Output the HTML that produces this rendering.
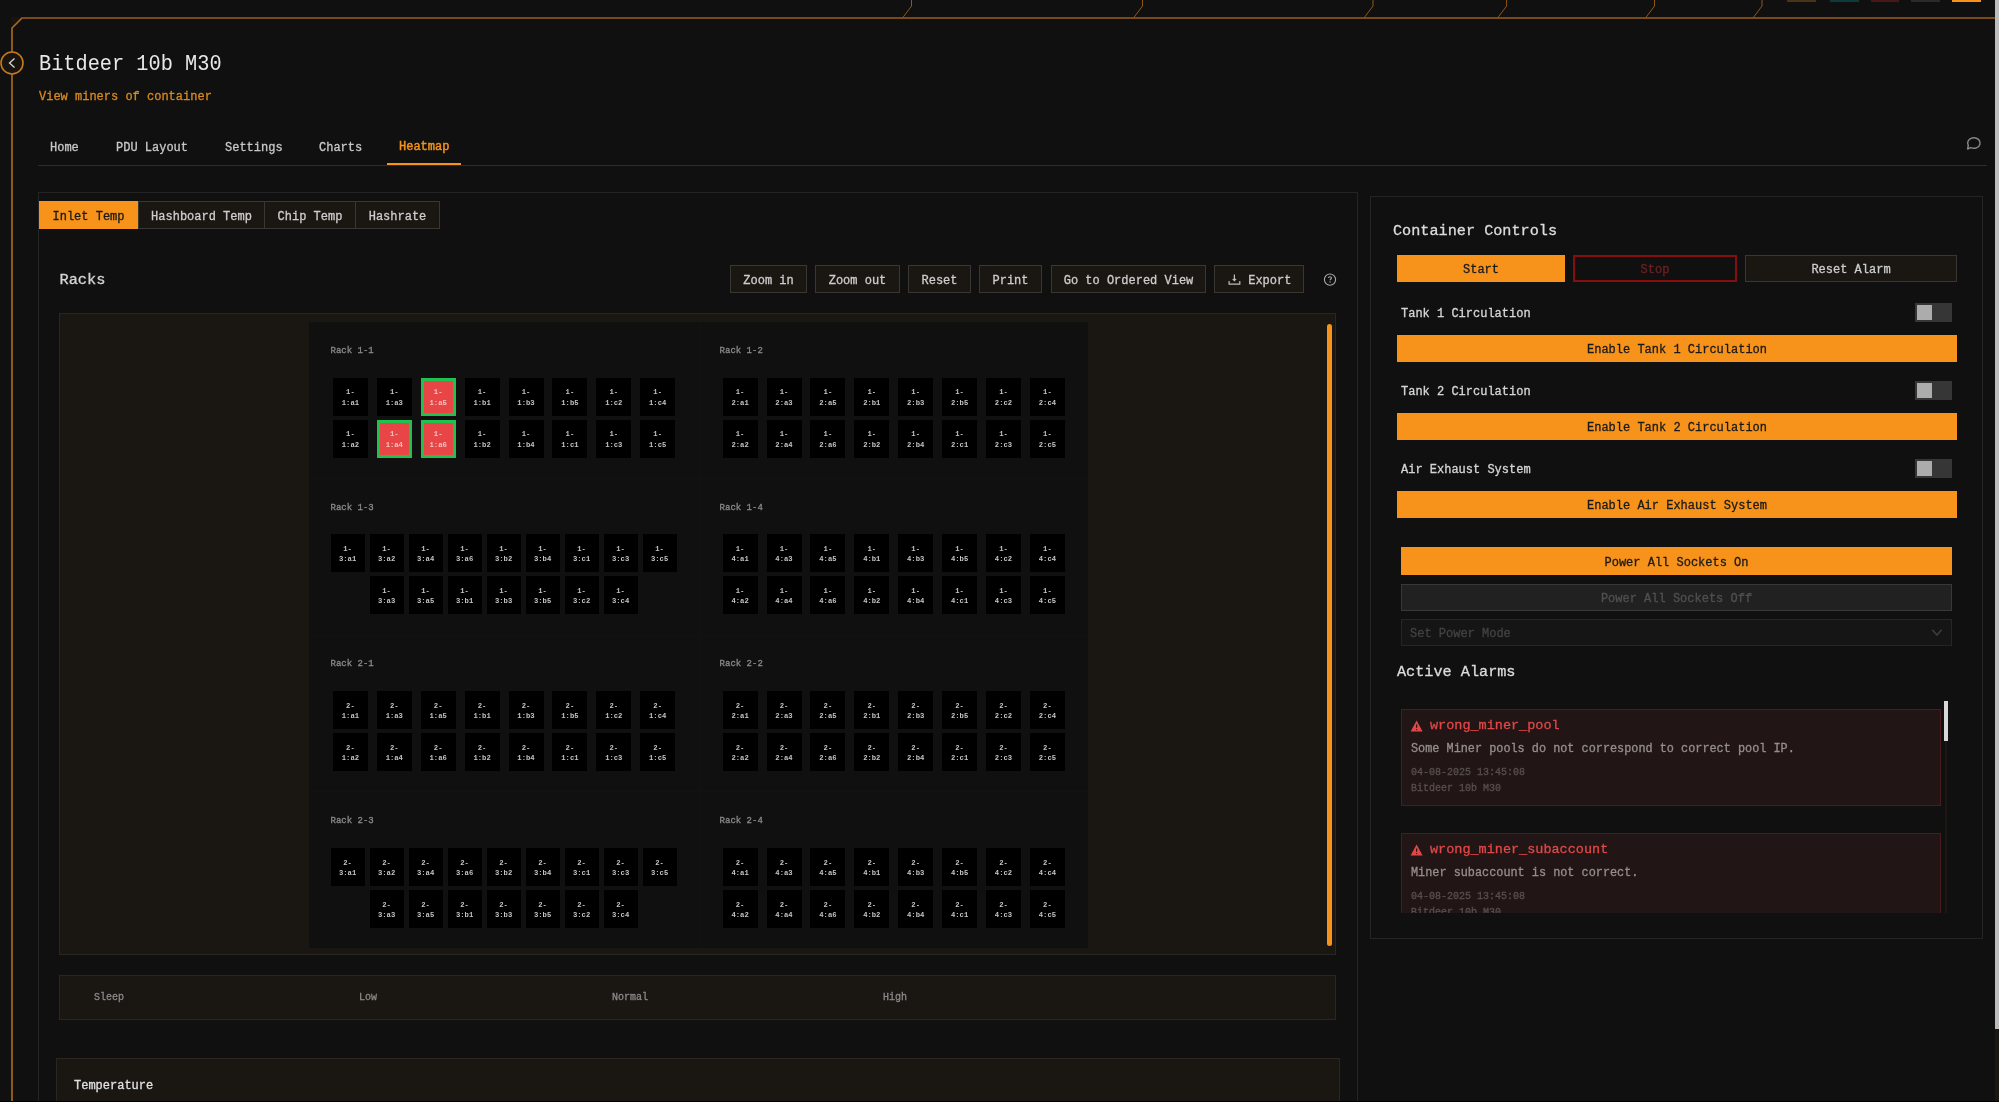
<!DOCTYPE html>
<html><head><meta charset="utf-8">
<style>
*{box-sizing:border-box;margin:0;padding:0}
html,body{width:1999px;height:1102px;overflow:hidden;background:#101010;font-family:"Liberation Mono",monospace;color:#e6e6e6;-webkit-text-stroke:0.3px currentColor}
.a{position:absolute}
.t{position:absolute;white-space:nowrap;line-height:1}
.btn{position:absolute;background:#1a1612;border:1px solid #393633;color:#cdcdcd;font-size:12px;line-height:1;display:flex;align-items:center;justify-content:center;white-space:nowrap;padding-top:3px}
.cell{position:absolute;width:35px;height:37.5px;background:#000;color:#c4c4c4;font-size:7.2px;font-weight:bold;line-height:10.2px;text-align:center;padding-top:9.3px;-webkit-text-stroke:0}
.cell.w{width:34px}
.cell.hot{background:#e84646;border:3px solid #1fc14f;padding-top:6.3px;color:#f2c4c4}
.rl{position:absolute;font-size:9px;color:#8a8a8a;line-height:1;white-space:nowrap;transform:scaleY(1.1);transform-origin:0 0}
.ob{position:absolute;background:#f7931a;color:#1a1a1a;font-size:12px;line-height:1;display:flex;align-items:center;justify-content:center;white-space:nowrap;padding-top:3px}
.lab{position:absolute;font-size:12px;color:#d6d6d6;line-height:1;white-space:nowrap}
.tog{position:absolute;width:37px;height:19px;background:#363636}
.tog i{position:absolute;left:2px;top:2px;width:15px;height:15px;background:#acacac}
</style></head><body><div style="position:absolute;left:0;top:0;width:1999px;height:1102px;will-change:transform">
<svg class="a" style="left:0;top:0" width="1999" height="1102" viewBox="0 0 1999 1102">
  <path d="M11 17 L23 17 L12 28 Z" fill="#19140f"/>
  <path d="M12 1102 L12 28 L22 18" fill="none" stroke="#ad6c1f" stroke-width="1.6"/><path d="M21.5 18 L1995 18" fill="none" stroke="#9c5d1a" stroke-width="1.4"/>
  <path d="M902.5 18 L911.5 6 L911.5 0 M1133.5 18 L1142.5 6 L1142.5 0 M1364 18 L1373 6 L1373 0 M1497.6 18 L1506.6 6 L1506.6 0 M1645.5 18 L1654.5 6 L1654.5 0 M1753 18 L1762 6 L1762 0" fill="none" stroke="#8f5618" stroke-width="1" stroke-linejoin="round"/>
  <circle cx="12" cy="63" r="11" fill="#1a140e" stroke="#c47a1c" stroke-width="1.6"/>
  <path d="M14.5 58.5 L9.5 63 L14.5 67.5" fill="none" stroke="#d8d8d8" stroke-width="1.3"/>
</svg>
<div class="a" style="left:1787px;top:0;width:29px;height:2px;background:#4a3418"></div>
<div class="a" style="left:1830px;top:0;width:29px;height:2px;background:#0f3a3a"></div>
<div class="a" style="left:1871px;top:0;width:28px;height:2px;background:#4a1717"></div>
<div class="a" style="left:1911px;top:0;width:29px;height:2px;background:#2a2a2e"></div>
<div class="a" style="left:1952px;top:0;width:29px;height:2px;background:#f7931a"></div>
<div class="a" style="left:1995px;top:0;width:4px;height:1029px;background:#bdbdbd"></div>
<div class="a" style="left:1995px;top:1029px;width:4px;height:73px;background:#1b1713"></div>
<div class="t" style="left:39px;top:53px;font-size:20.3px;color:#e8e8e8;-webkit-text-stroke:0;transform:scaleY(1.12);transform-origin:0 0">Bitdeer 10b M30</div>
<div class="t" style="left:39px;top:90.6px;font-size:12px;color:#d98a1f">View miners of container</div>
<div class="t" style="left:50px;top:142.4px;font-size:12px;color:#c8c8c8">Home</div>
<div class="t" style="left:116px;top:142.4px;font-size:12px;color:#c8c8c8">PDU Layout</div>
<div class="t" style="left:225px;top:142.4px;font-size:12px;color:#c8c8c8">Settings</div>
<div class="t" style="left:319px;top:142.4px;font-size:12px;color:#c8c8c8">Charts</div>
<div class="t" style="left:399px;top:141.4px;font-size:12px;color:#f7931a;-webkit-text-stroke:0.45px #f7931a">Heatmap</div>
<div class="a" style="left:38px;top:165px;width:1949px;height:1px;background:#2c2c2c"></div>
<div class="a" style="left:387px;top:163px;width:74px;height:2px;background:#f7931a"></div>
<svg class="a" style="left:1962px;top:132.7px" width="24" height="20" viewBox="0 0 24 20">
<path d="M6.3 12.3 A6.2 5.3 0 1 1 8.8 14.6 L5.6 16 Z" fill="none" stroke="#858585" stroke-width="1.5" stroke-linejoin="round"/>
</svg>
<div class="a" style="left:38px;top:192px;width:1320px;height:920px;border:1px solid #242424;border-bottom:none"></div>
<div class="btn" style="left:39px;top:201px;width:99px;height:28px;background:#f7931a;border-color:#f7931a;color:#1a1a1a">Inlet Temp</div>
<div class="btn" style="left:138px;top:201px;width:127px;height:28px">Hashboard Temp</div>
<div class="btn" style="left:264px;top:201px;width:92px;height:28px">Chip Temp</div>
<div class="btn" style="left:355px;top:201px;width:85px;height:28px">Hashrate</div>
<div class="t" style="left:59.5px;top:273px;font-size:15.3px;color:#d4d4d4">Racks</div>
<div class="btn" style="left:730px;top:265px;width:77px;height:28px">Zoom in</div>
<div class="btn" style="left:815px;top:265px;width:85px;height:28px">Zoom out</div>
<div class="btn" style="left:908px;top:265px;width:63px;height:28px">Reset</div>
<div class="btn" style="left:979px;top:265px;width:63px;height:28px">Print</div>
<div class="btn" style="left:1051px;top:265px;width:155px;height:28px">Go to Ordered View</div>
<div class="btn" style="left:1214px;top:265px;width:90px;height:28px">&nbsp;&nbsp;&nbsp;Export</div>
<svg class="a" style="left:1227px;top:272px" width="14" height="14" viewBox="0 0 14 14">
<path d="M7.4 2.6 V8.6 M5.7 6.9 L7.4 8.6 L9.1 6.9 M2.1 9 V12.1 H12.8 V9" fill="none" stroke="#bdbdbd" stroke-width="1.2"/></svg>
<svg class="a" style="left:1322px;top:272px" width="16" height="16" viewBox="0 0 16 16">
<circle cx="8" cy="7.6" r="5.6" fill="none" stroke="#a8a8a8" stroke-width="1.1"/>
<path d="M6.5 6.1 C6.5 5.2 7.2 4.7 8 4.7 C8.8 4.7 9.5 5.2 9.5 6 C9.5 7 8.1 7.1 8.1 8.3" fill="none" stroke="#a8a8a8" stroke-width="1.1"/>
<path d="M7.3 10 H8.9" stroke="#a8a8a8" stroke-width="0.9"/></svg>
<div class="a" style="left:59px;top:313px;width:1277px;height:642px;background:#1a1612;border:1px solid #2a2622"></div>
<div class="a" style="left:309px;top:322px;width:779px;height:626px;background:#101011"></div>
<div class="a" style="left:1327px;top:324px;width:5px;height:622px;background:#f7931a;border-radius:3px"></div>
<div class="a" style="left:699px;top:322px;width:1px;height:626px;background:#121212"></div>
<div class="a" style="left:309px;top:478px;width:779px;height:1px;background:#121212"></div>
<div class="a" style="left:309px;top:635px;width:779px;height:1px;background:#121212"></div>
<div class="a" style="left:309px;top:791px;width:779px;height:1px;background:#121212"></div>
<div class="rl" style="left:330.5px;top:345.5px">Rack 1-1</div>
<div class="cell " style="left:332.9px;top:378px">1-<br>1:a1</div>
<div class="cell " style="left:376.8px;top:378px">1-<br>1:a3</div>
<div class="cell hot" style="left:420.7px;top:378px">1-<br>1:a5</div>
<div class="cell " style="left:464.6px;top:378px">1-<br>1:b1</div>
<div class="cell " style="left:508.5px;top:378px">1-<br>1:b3</div>
<div class="cell " style="left:552.4px;top:378px">1-<br>1:b5</div>
<div class="cell " style="left:596.3px;top:378px">1-<br>1:c2</div>
<div class="cell " style="left:640.2px;top:378px">1-<br>1:c4</div>
<div class="cell " style="left:332.9px;top:420px">1-<br>1:a2</div>
<div class="cell hot" style="left:376.8px;top:420px">1-<br>1:a4</div>
<div class="cell hot" style="left:420.7px;top:420px">1-<br>1:a6</div>
<div class="cell " style="left:464.6px;top:420px">1-<br>1:b2</div>
<div class="cell " style="left:508.5px;top:420px">1-<br>1:b4</div>
<div class="cell " style="left:552.4px;top:420px">1-<br>1:c1</div>
<div class="cell " style="left:596.3px;top:420px">1-<br>1:c3</div>
<div class="cell " style="left:640.2px;top:420px">1-<br>1:c5</div>
<div class="rl" style="left:719.6px;top:345.5px">Rack 1-2</div>
<div class="cell " style="left:722.6px;top:378px">1-<br>2:a1</div>
<div class="cell " style="left:766.5px;top:378px">1-<br>2:a3</div>
<div class="cell " style="left:810.4px;top:378px">1-<br>2:a5</div>
<div class="cell " style="left:854.3px;top:378px">1-<br>2:b1</div>
<div class="cell " style="left:898.2px;top:378px">1-<br>2:b3</div>
<div class="cell " style="left:942.1px;top:378px">1-<br>2:b5</div>
<div class="cell " style="left:986.0px;top:378px">1-<br>2:c2</div>
<div class="cell " style="left:1029.9px;top:378px">1-<br>2:c4</div>
<div class="cell " style="left:722.6px;top:420px">1-<br>2:a2</div>
<div class="cell " style="left:766.5px;top:420px">1-<br>2:a4</div>
<div class="cell " style="left:810.4px;top:420px">1-<br>2:a6</div>
<div class="cell " style="left:854.3px;top:420px">1-<br>2:b2</div>
<div class="cell " style="left:898.2px;top:420px">1-<br>2:b4</div>
<div class="cell " style="left:942.1px;top:420px">1-<br>2:c1</div>
<div class="cell " style="left:986.0px;top:420px">1-<br>2:c3</div>
<div class="cell " style="left:1029.9px;top:420px">1-<br>2:c5</div>
<div class="rl" style="left:330.5px;top:502.5px">Rack 1-3</div>
<div class="cell w" style="left:330.6px;top:534.4px">1-<br>3:a1</div>
<div class="cell w" style="left:369.6px;top:534.4px">1-<br>3:a2</div>
<div class="cell w" style="left:408.6px;top:534.4px">1-<br>3:a4</div>
<div class="cell w" style="left:447.6px;top:534.4px">1-<br>3:a6</div>
<div class="cell w" style="left:486.6px;top:534.4px">1-<br>3:b2</div>
<div class="cell w" style="left:525.6px;top:534.4px">1-<br>3:b4</div>
<div class="cell w" style="left:564.6px;top:534.4px">1-<br>3:c1</div>
<div class="cell w" style="left:603.6px;top:534.4px">1-<br>3:c3</div>
<div class="cell w" style="left:642.6px;top:534.4px">1-<br>3:c5</div>
<div class="cell w" style="left:369.6px;top:576.4px">1-<br>3:a3</div>
<div class="cell w" style="left:408.6px;top:576.4px">1-<br>3:a5</div>
<div class="cell w" style="left:447.6px;top:576.4px">1-<br>3:b1</div>
<div class="cell w" style="left:486.6px;top:576.4px">1-<br>3:b3</div>
<div class="cell w" style="left:525.6px;top:576.4px">1-<br>3:b5</div>
<div class="cell w" style="left:564.6px;top:576.4px">1-<br>3:c2</div>
<div class="cell w" style="left:603.6px;top:576.4px">1-<br>3:c4</div>
<div class="rl" style="left:719.6px;top:502.5px">Rack 1-4</div>
<div class="cell " style="left:722.6px;top:534.4px">1-<br>4:a1</div>
<div class="cell " style="left:766.5px;top:534.4px">1-<br>4:a3</div>
<div class="cell " style="left:810.4px;top:534.4px">1-<br>4:a5</div>
<div class="cell " style="left:854.3px;top:534.4px">1-<br>4:b1</div>
<div class="cell " style="left:898.2px;top:534.4px">1-<br>4:b3</div>
<div class="cell " style="left:942.1px;top:534.4px">1-<br>4:b5</div>
<div class="cell " style="left:986.0px;top:534.4px">1-<br>4:c2</div>
<div class="cell " style="left:1029.9px;top:534.4px">1-<br>4:c4</div>
<div class="cell " style="left:722.6px;top:576.4px">1-<br>4:a2</div>
<div class="cell " style="left:766.5px;top:576.4px">1-<br>4:a4</div>
<div class="cell " style="left:810.4px;top:576.4px">1-<br>4:a6</div>
<div class="cell " style="left:854.3px;top:576.4px">1-<br>4:b2</div>
<div class="cell " style="left:898.2px;top:576.4px">1-<br>4:b4</div>
<div class="cell " style="left:942.1px;top:576.4px">1-<br>4:c1</div>
<div class="cell " style="left:986.0px;top:576.4px">1-<br>4:c3</div>
<div class="cell " style="left:1029.9px;top:576.4px">1-<br>4:c5</div>
<div class="rl" style="left:330.5px;top:659.2px">Rack 2-1</div>
<div class="cell " style="left:332.9px;top:691.4px">2-<br>1:a1</div>
<div class="cell " style="left:376.8px;top:691.4px">2-<br>1:a3</div>
<div class="cell " style="left:420.7px;top:691.4px">2-<br>1:a5</div>
<div class="cell " style="left:464.6px;top:691.4px">2-<br>1:b1</div>
<div class="cell " style="left:508.5px;top:691.4px">2-<br>1:b3</div>
<div class="cell " style="left:552.4px;top:691.4px">2-<br>1:b5</div>
<div class="cell " style="left:596.3px;top:691.4px">2-<br>1:c2</div>
<div class="cell " style="left:640.2px;top:691.4px">2-<br>1:c4</div>
<div class="cell " style="left:332.9px;top:733.4px">2-<br>1:a2</div>
<div class="cell " style="left:376.8px;top:733.4px">2-<br>1:a4</div>
<div class="cell " style="left:420.7px;top:733.4px">2-<br>1:a6</div>
<div class="cell " style="left:464.6px;top:733.4px">2-<br>1:b2</div>
<div class="cell " style="left:508.5px;top:733.4px">2-<br>1:b4</div>
<div class="cell " style="left:552.4px;top:733.4px">2-<br>1:c1</div>
<div class="cell " style="left:596.3px;top:733.4px">2-<br>1:c3</div>
<div class="cell " style="left:640.2px;top:733.4px">2-<br>1:c5</div>
<div class="rl" style="left:719.6px;top:659.2px">Rack 2-2</div>
<div class="cell " style="left:722.6px;top:691.4px">2-<br>2:a1</div>
<div class="cell " style="left:766.5px;top:691.4px">2-<br>2:a3</div>
<div class="cell " style="left:810.4px;top:691.4px">2-<br>2:a5</div>
<div class="cell " style="left:854.3px;top:691.4px">2-<br>2:b1</div>
<div class="cell " style="left:898.2px;top:691.4px">2-<br>2:b3</div>
<div class="cell " style="left:942.1px;top:691.4px">2-<br>2:b5</div>
<div class="cell " style="left:986.0px;top:691.4px">2-<br>2:c2</div>
<div class="cell " style="left:1029.9px;top:691.4px">2-<br>2:c4</div>
<div class="cell " style="left:722.6px;top:733.4px">2-<br>2:a2</div>
<div class="cell " style="left:766.5px;top:733.4px">2-<br>2:a4</div>
<div class="cell " style="left:810.4px;top:733.4px">2-<br>2:a6</div>
<div class="cell " style="left:854.3px;top:733.4px">2-<br>2:b2</div>
<div class="cell " style="left:898.2px;top:733.4px">2-<br>2:b4</div>
<div class="cell " style="left:942.1px;top:733.4px">2-<br>2:c1</div>
<div class="cell " style="left:986.0px;top:733.4px">2-<br>2:c3</div>
<div class="cell " style="left:1029.9px;top:733.4px">2-<br>2:c5</div>
<div class="rl" style="left:330.5px;top:815.5px">Rack 2-3</div>
<div class="cell w" style="left:330.6px;top:848.4px">2-<br>3:a1</div>
<div class="cell w" style="left:369.6px;top:848.4px">2-<br>3:a2</div>
<div class="cell w" style="left:408.6px;top:848.4px">2-<br>3:a4</div>
<div class="cell w" style="left:447.6px;top:848.4px">2-<br>3:a6</div>
<div class="cell w" style="left:486.6px;top:848.4px">2-<br>3:b2</div>
<div class="cell w" style="left:525.6px;top:848.4px">2-<br>3:b4</div>
<div class="cell w" style="left:564.6px;top:848.4px">2-<br>3:c1</div>
<div class="cell w" style="left:603.6px;top:848.4px">2-<br>3:c3</div>
<div class="cell w" style="left:642.6px;top:848.4px">2-<br>3:c5</div>
<div class="cell w" style="left:369.6px;top:890.4px">2-<br>3:a3</div>
<div class="cell w" style="left:408.6px;top:890.4px">2-<br>3:a5</div>
<div class="cell w" style="left:447.6px;top:890.4px">2-<br>3:b1</div>
<div class="cell w" style="left:486.6px;top:890.4px">2-<br>3:b3</div>
<div class="cell w" style="left:525.6px;top:890.4px">2-<br>3:b5</div>
<div class="cell w" style="left:564.6px;top:890.4px">2-<br>3:c2</div>
<div class="cell w" style="left:603.6px;top:890.4px">2-<br>3:c4</div>
<div class="rl" style="left:719.6px;top:815.5px">Rack 2-4</div>
<div class="cell " style="left:722.6px;top:848.4px">2-<br>4:a1</div>
<div class="cell " style="left:766.5px;top:848.4px">2-<br>4:a3</div>
<div class="cell " style="left:810.4px;top:848.4px">2-<br>4:a5</div>
<div class="cell " style="left:854.3px;top:848.4px">2-<br>4:b1</div>
<div class="cell " style="left:898.2px;top:848.4px">2-<br>4:b3</div>
<div class="cell " style="left:942.1px;top:848.4px">2-<br>4:b5</div>
<div class="cell " style="left:986.0px;top:848.4px">2-<br>4:c2</div>
<div class="cell " style="left:1029.9px;top:848.4px">2-<br>4:c4</div>
<div class="cell " style="left:722.6px;top:890.4px">2-<br>4:a2</div>
<div class="cell " style="left:766.5px;top:890.4px">2-<br>4:a4</div>
<div class="cell " style="left:810.4px;top:890.4px">2-<br>4:a6</div>
<div class="cell " style="left:854.3px;top:890.4px">2-<br>4:b2</div>
<div class="cell " style="left:898.2px;top:890.4px">2-<br>4:b4</div>
<div class="cell " style="left:942.1px;top:890.4px">2-<br>4:c1</div>
<div class="cell " style="left:986.0px;top:890.4px">2-<br>4:c3</div>
<div class="cell " style="left:1029.9px;top:890.4px">2-<br>4:c5</div>
<div class="a" style="left:59px;top:975px;width:1277px;height:45px;background:#1a1612;border:1px solid #2a2622"></div>
<div class="t" style="left:94px;top:993px;font-size:10px;color:#8a8a8a">Sleep</div>
<div class="t" style="left:359px;top:993px;font-size:10px;color:#8a8a8a">Low</div>
<div class="t" style="left:612px;top:993px;font-size:10px;color:#8a8a8a">Normal</div>
<div class="t" style="left:883px;top:993px;font-size:10px;color:#8a8a8a">High</div>
<div class="a" style="left:56px;top:1058px;width:1284px;height:60px;background:#1a1612;border:1px solid #2a2622"></div>
<div class="t" style="left:74px;top:1080px;font-size:12px;color:#e0e0e0">Temperature</div>
<div class="a" style="left:1370px;top:196px;width:613px;height:743px;border:1px solid #242424"></div>
<div class="t" style="left:1393px;top:224px;font-size:15.2px;color:#dcdcdc">Container Controls</div>
<div class="ob" style="left:1397px;top:255px;width:168px;height:27px">Start</div>
<div class="btn" style="left:1573px;top:255px;width:164px;height:27px;background:#101010;border:2px solid #880d0d;color:#6a2222">Stop</div>
<div class="btn" style="left:1745px;top:255px;width:212px;height:27px">Reset Alarm</div>
<div class="lab" style="left:1401px;top:308px">Tank 1 Circulation</div>
<div class="tog" style="left:1915px;top:303px"><i></i></div>
<div class="ob" style="left:1397px;top:335px;width:560px;height:27px">Enable Tank 1 Circulation</div>
<div class="lab" style="left:1401px;top:386px">Tank 2 Circulation</div>
<div class="tog" style="left:1915px;top:381px"><i></i></div>
<div class="ob" style="left:1397px;top:413px;width:560px;height:27px">Enable Tank 2 Circulation</div>
<div class="lab" style="left:1401px;top:464px">Air Exhaust System</div>
<div class="tog" style="left:1915px;top:459px"><i></i></div>
<div class="ob" style="left:1397px;top:491px;width:560px;height:27px">Enable Air Exhaust System</div>
<div class="ob" style="left:1401px;top:547px;width:551px;height:28px">Power All Sockets On</div>
<div class="btn" style="left:1401px;top:584px;width:551px;height:27px;background:#212121;border-color:#383838;color:#505050">Power All Sockets Off</div>
<div class="a" style="left:1401px;top:619px;width:551px;height:27px;background:#151515;border:1px solid #262626"></div>
<div class="t" style="left:1410px;top:628px;font-size:12px;color:#434343">Set Power Mode</div>
<svg class="a" style="left:1930px;top:627px" width="14" height="12" viewBox="0 0 14 12">
<path d="M2.6 3.3 L6.9 8 L11.2 3.3" fill="none" stroke="#3c3c3c" stroke-width="1.7" stroke-linecap="round" stroke-linejoin="round"/></svg>
<div class="t" style="left:1397px;top:664.5px;font-size:15.2px;color:#dcdcdc">Active Alarms</div>
<div class="a" style="left:1401px;top:700px;width:550px;height:213px;overflow:hidden">
<div class="a" style="left:0;top:9px;width:540px;height:97px;background:#221515;border:1px solid #4a1c1c">
<svg class="a" style="left:8px;top:10px" width="14" height="13" viewBox="0 0 14 13"><path d="M6.6 0.6 L12.6 11.6 H0.6 Z" fill="#e04848"/><path d="M6.6 4.6 V7.8" stroke="#221515" stroke-width="1.2"/><circle cx="6.6" cy="9.6" r="0.7" fill="#221515"/></svg>
<div class="t" style="left:28px;top:9px;font-size:13.5px;color:#e04848">wrong_miner_pool</div>
<div class="t" style="left:9px;top:34.3px;font-size:11.85px;color:#968e8e">Some Miner pools do not correspond to correct pool IP.</div>
<div class="t" style="left:9px;top:58px;font-size:10px;color:#574f4f">04-08-2025 13:45:08</div>
<div class="t" style="left:9px;top:74px;font-size:10px;color:#574f4f">Bitdeer 10b M30</div>
</div>
<div class="a" style="left:0;top:133px;width:540px;height:97px;background:#221515;border:1px solid #4a1c1c">
<svg class="a" style="left:8px;top:10px" width="14" height="13" viewBox="0 0 14 13"><path d="M6.6 0.6 L12.6 11.6 H0.6 Z" fill="#e04848"/><path d="M6.6 4.6 V7.8" stroke="#221515" stroke-width="1.2"/><circle cx="6.6" cy="9.6" r="0.7" fill="#221515"/></svg>
<div class="t" style="left:28px;top:9px;font-size:13.5px;color:#e04848">wrong_miner_subaccount</div>
<div class="t" style="left:9px;top:34.3px;font-size:11.85px;color:#968e8e">Miner subaccount is not correct.</div>
<div class="t" style="left:9px;top:58px;font-size:10px;color:#574f4f">04-08-2025 13:45:08</div>
<div class="t" style="left:9px;top:74px;font-size:10px;color:#574f4f">Bitdeer 10b M30</div>
</div>
<div class="a" style="left:543px;top:1px;width:4px;height:40px;background:#d8d8d8"></div>
<div class="a" style="left:544px;top:41px;width:2px;height:172px;background:#1c1814"></div>
</div>
<div class="a" style="left:0;top:1101px;width:1999px;height:1px;background:#000"></div>
</div></body></html>
